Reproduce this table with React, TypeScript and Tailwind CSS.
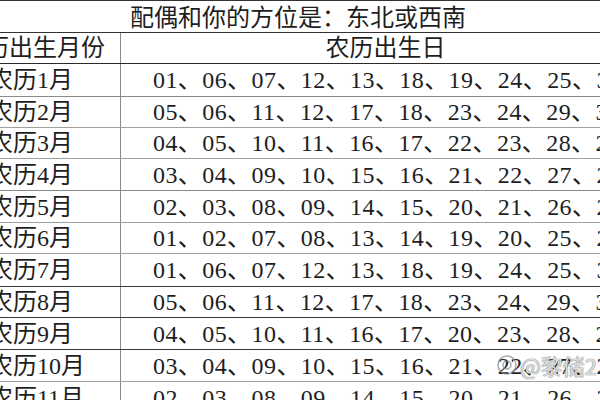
import React from 'react';

interface Row {
  label: string;
  days: string[];
  height: string;
  line: string;
}

// rows copied from the lunar table, heights keep the grid lines where the picture has them
const rows: Row[] = [
  { label: '农历1月', days: ['01', '06', '07', '12', '13', '18', '19', '24', '25', '30'], height: 'h-[33px]', line: 'border-[#8a8a8a]' },
  { label: '农历2月', days: ['05', '06', '11', '12', '17', '18', '23', '24', '29', '30'], height: 'h-[31px]', line: 'border-[#a0a0a0]' },
  { label: '农历3月', days: ['04', '05', '10', '11', '16', '17', '22', '23', '28', '29'], height: 'h-[31px]', line: 'border-[#a0a0a0]' },
  { label: '农历4月', days: ['03', '04', '09', '10', '15', '16', '21', '22', '27', '28'], height: 'h-[32px]', line: 'border-[#8a8a8a]' },
  { label: '农历5月', days: ['02', '03', '08', '09', '14', '15', '20', '21', '26', '27'], height: 'h-[32px]', line: 'border-[#a0a0a0]' },
  { label: '农历6月', days: ['01', '02', '07', '08', '13', '14', '19', '20', '25', '26'], height: 'h-[31px]', line: 'border-[#a0a0a0]' },
  { label: '农历7月', days: ['01', '06', '07', '12', '13', '18', '19', '24', '25', '30'], height: 'h-[33px]', line: 'border-[#3a3a3a]' },
  { label: '农历8月', days: ['05', '06', '11', '12', '17', '18', '23', '24', '29', '30'], height: 'h-[31px]', line: 'border-[#3a3a3a]' },
  { label: '农历9月', days: ['04', '05', '10', '11', '16', '17', '20', '23', '28', '29'], height: 'h-[32px]', line: 'border-[#3a3a3a]' },
  { label: '农历10月', days: ['03', '04', '09', '10', '15', '16', '21', '22', '27', '28'], height: 'h-[32px]', line: 'border-[#a0a0a0]' },
  { label: '农历11月', days: ['02', '03', '08', '09', '14', '15', '20', '21', '26', '27'], height: 'h-[32px]', line: 'border-[#a0a0a0]' },
];

export default function App() {
  return (
    <div className="relative w-[600px] h-[400px] overflow-hidden bg-white text-[#1e1e1e] text-[24px] leading-none font-['Liberation_Serif','Noto_Sans_CJK_SC',serif]">
      <div className="ml-[-54px] w-[704px] border-t border-[#333]">
        {/* Title */}
        <div className="h-[32px] border-b border-[#333] flex items-center justify-center pt-[2px]">
          配偶和你的方位是：东北或西南
        </div>

        {/* Header */}
        <div className="grid grid-cols-[175px_1fr] h-[31px] border-b border-[#2a2a2a]">
          <div className="border-r border-[#8a8a8a] flex items-center justify-center">农历出生月份</div>
          <div className="flex items-center justify-center">农历出生日</div>
        </div>

        {/* Body */}
        {rows.map((row) => (
          <div key={row.label} className={`grid grid-cols-[175px_1fr] border-b ${row.height} ${row.line}`}>
            <div className="border-r border-[#8a8a8a] flex items-center pl-[43px] whitespace-nowrap">
              {row.label}
            </div>
            <div className="flex items-center pl-[32px] whitespace-nowrap tracking-[0.42px]">
              {row.days.map((d, i) => (
                <span key={i}>
                  {d}
                  {i < row.days.length - 1 ? '、' : ''}
                </span>
              ))}
            </div>
          </div>
        ))}
      </div>

      {/* Watermark */}
      <div className="absolute left-[496px] top-[354px] flex items-center gap-[2px] text-[22px] font-['Noto_Sans_CJK_SC',sans-serif] text-[rgba(255,255,255,0.75)] [text-shadow:0_0_1px_#777,0_0_1px_#777]">
        <svg width="22" height="22" viewBox="0 0 22 22" className="opacity-70">
          <circle cx="11" cy="11" r="9" fill="none" stroke="#888" strokeWidth="1.5" />
          <circle cx="11" cy="11" r="4" fill="none" stroke="#888" strokeWidth="1.5" />
        </svg>
        <span>@黎储2</span>
      </div>
    </div>
  );
}
